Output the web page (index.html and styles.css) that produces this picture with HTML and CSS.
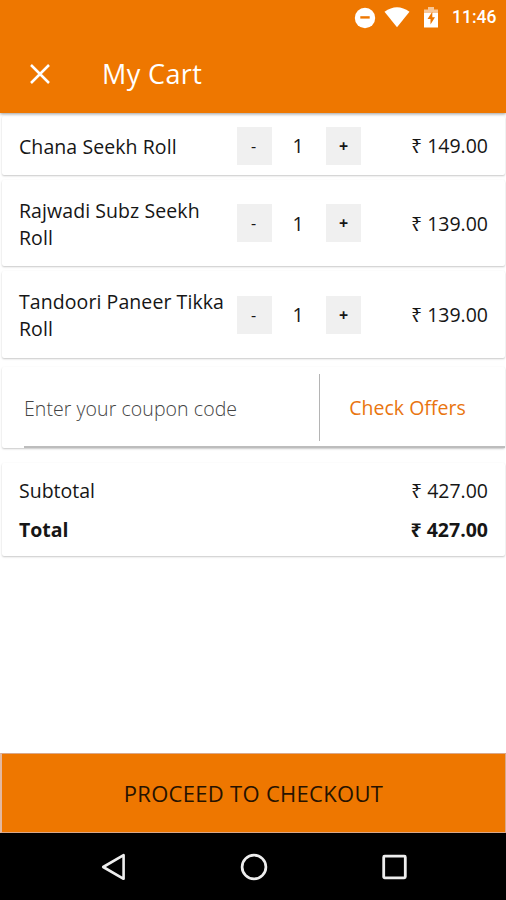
FILE: index.html
```html
<!DOCTYPE html>
<html lang="en">
<head>
<meta charset="utf-8">
<title>My Cart</title>
<link rel="stylesheet" href="styles.css">
</head>
<body>
<div class="screen">
  <header class="top">
    <div class="status">
      <svg class="dnd" width="22" height="22" viewBox="0 0 22 22"><circle cx="11" cy="11" r="10.2" fill="#fff"/><path d="M6.3 10.4h9.4" stroke="#ee7700" stroke-width="2.4"/></svg>
      <svg class="wifi" width="26" height="21" viewBox="0 0 26 21"><path d="M.5 4.7Q13-4.3 25.5 4.7L13 20.3Z" fill="#fff"/></svg>
      <svg class="battery" width="16" height="21" viewBox="0 0 16 21"><path d="M1 2.5h4V0h6v2.5h4V7H1Z" fill="#f8c798"/><path d="M1 6h14v14.5H1Z" fill="#fff"/><path d="M9.3 4.8 4.5 12h3v5.6l4.5-7.4H9.3Z" fill="#ee7700"/></svg>
      <span class="clock">11:46</span>
    </div>
    <div class="appbar">
      <svg class="close" width="20" height="20" viewBox="0 0 20 20"><path d="M1 1l18 18M19 1 1 19" stroke="#fff" stroke-width="2.5"/></svg>
      <h1>My Cart</h1>
    </div>
  </header>
  <main>
    <section class="card item first">
      <div class="name">Chana Seekh Roll</div>
      <button class="step minus">-</button><span class="qty">1</span><button class="step">+</button>
      <div class="price">₹ 149.00</div>
    </section>
    <section class="card item second">
      <div class="name">Rajwadi Subz Seekh Roll</div>
      <button class="step minus">-</button><span class="qty">1</span><button class="step">+</button>
      <div class="price">₹ 139.00</div>
    </section>
    <section class="card item third">
      <div class="name">Tandoori Paneer Tikka Roll</div>
      <button class="step minus">-</button><span class="qty">1</span><button class="step">+</button>
      <div class="price">₹ 139.00</div>
    </section>
    <section class="card coupon">
      <div class="coupon-row">
        <div class="field">Enter your coupon code</div>
        <div class="offers">Check Offers</div>
      </div>
    </section>
    <section class="card totals">
      <div class="line"><span>Subtotal</span><span class="price">₹ 427.00</span></div>
      <div class="line bold"><span>Total</span><span class="price">₹ 427.00</span></div>
    </section>
  </main>
  <button class="checkout"><span>PROCEED TO CHECKOUT</span></button>
  <nav class="navbar">
    <svg width="25" height="28" viewBox="0 0 25 28"><path d="M2.2 14 22.6 2.2v23.6Z" fill="none" stroke="#eee" stroke-width="2.6" stroke-linejoin="round"/></svg>
    <svg width="28" height="28" viewBox="0 0 28 28"><circle cx="14" cy="14" r="11.9" fill="none" stroke="#eee" stroke-width="2.7"/></svg>
    <svg width="25" height="28" viewBox="0 0 25 28"><rect x="1.7" y="3.2" width="21.6" height="21.6" rx="1" fill="none" stroke="#eee" stroke-width="2.8"/></svg>
  </nav>
</div>
</body>
</html>
```
FILE: styles.css
```css
* { box-sizing: border-box; }
body { margin: 0; background: #fff; font-family: "Open Sans", "Noto Sans", sans-serif; font-size: 19.5px; color: #161616; }
button { border: 0; padding: 0; font: inherit; color: inherit; }
.screen { width: 506px; height: 900px; display: flex; flex-direction: column; }
.top { height: 113px; background: #ee7700; color: #fff; box-shadow: 0 1px 3px rgba(0,0,0,.4); position: relative; flex: none; }
.status { height: 35px; display: flex; align-items: center; justify-content: flex-end; padding-right: 10px; }
.wifi { margin: 0 13px 0 8px; }
.battery { margin-right: 13px; }
.clock { font: 500 17.5px/35px Roboto, sans-serif; width: 44px; white-space: nowrap; }
.appbar { height: 77px; display: flex; align-items: center; padding: 0 30px; }
.appbar h1 { margin: 1px 0 0 52px; font-size: 27px; font-weight: 400; line-height: 36px; letter-spacing: .4px; }
main { flex: 1; padding: 3px 1px 0 2px; }
.card { background: #fff; border-radius: 2px; box-shadow: 0 1px 2px rgba(0,0,0,.22); }
.item { display: flex; align-items: center; padding: 0 17px; margin-bottom: 5px; }
.first { height: 59px; }
.second { height: 86px; }
.third { height: 87px; margin-bottom: 9px; }
.name { width: 218px; line-height: 27px; padding: 1px 8px 0 0; letter-spacing: .08px; }
.step { width: 35px; height: 38px; background: #f0f0f0; font-size: 16px; font-weight: 700; line-height: 38px; }
.minus { font-weight: 400; padding-right: 2px; }
.qty { width: 54px; text-align: center; padding-right: 2px; }
.price { margin-left: auto; white-space: nowrap; }
.coupon { height: 81px; padding-left: 22px; margin-bottom: 15px; }
.coupon-row { height: 81px; border-bottom: 2px solid #bdbdbd; display: flex; align-items: center; padding-top: 2px; }
.field { width: 296px; height: 67px; line-height: 69px; border-right: 1px solid #b4b4b4; color: #444; font-weight: 300; letter-spacing: .07px; }
.offers { flex: 1; text-align: center; line-height: 69px; color: #e97510; padding-right: 10px; }
.totals { height: 93px; padding: 8px 17px 0; }
.line { display: flex; align-items: center; height: 39px; }
.bold { font-weight: 700; }
.checkout { height: 80px; background: #ee7700; border: 1px solid #d9a88a; border-left: 2px solid #e3b8a0; font-size: 22px; letter-spacing: .3px; flex: none; color: #261200; padding-bottom: 1px; }
.navbar { height: 67px; background: #000; display: flex; align-items: center; justify-content: space-between; padding: 0 99px 0 101px; flex: none; }
```
